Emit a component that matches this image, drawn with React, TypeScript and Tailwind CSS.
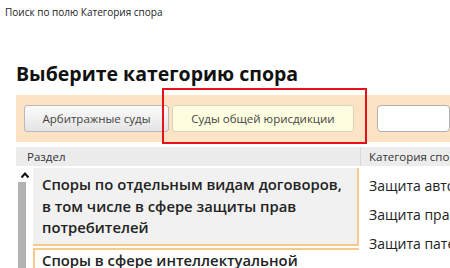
import React from "react";

export default function App() {
  const font = { fontFamily: '"Open Sans", "Noto Sans", sans-serif' };
  return (
    <div className="relative w-[450px] h-[268px] overflow-hidden bg-white text-[#1a1a1a]" style={font}>
      <div className="pl-[5px] pt-[6px] text-[10px] leading-[13px] text-[#222]">Поиск по полю Категория спора</div>
      <div className="ml-[16px] mt-[41px] text-[19.5px] font-bold leading-[28px] text-[#111]">Выберите категорию спора</div>
      <div className="ml-[16px] mt-[7px] h-[47px] bg-[#fce3c6] flex items-center pl-[8px]">
        <div className="shrink-0 w-[145px] h-[27px] rounded-[3px] border border-[#b9b9b9] bg-gradient-to-b from-[#fbfbfb] to-[#e4e4e4] flex items-center justify-center text-[11.5px] text-[#444]">Арбитражные суды</div>
        <div className="shrink-0 ml-[3px] w-[182px] h-[27px] rounded-[3px] border border-[#d9d6b8] bg-[#fffddf] flex items-center justify-center text-[11.5px] text-[#444]">Суды общей юрисдикции</div>
        <div className="ml-[23px] flex-1 h-[27px] rounded-[4px] border border-[#b0b0b0] bg-white"></div>
      </div>
      <div className="ml-[16px] mt-[5px] h-[19px] bg-[#ececec] flex items-center text-[11.5px] text-[#333] overflow-hidden">
        <div className="shrink-0 w-[344px] pl-[11px]">Раздел</div>
        <div className="shrink-0 h-full border-l border-[#d8d8d8] pl-[8px] flex items-center whitespace-nowrap">Категория спора</div>
      </div>
      <div className="ml-[16px] mt-[2px] flex overflow-hidden">
        <div className="shrink-0 w-[344px] flex">
          <div className="w-[17px] flex flex-col items-center">
            <svg width="10" height="8" viewBox="0 0 10 8" className="mt-[3px]">
              <path d="M1.5 6.5 L5 2.5 L8.5 6.5" fill="none" stroke="#111" strokeWidth="2" />
            </svg>
            <div className="mt-[3px] ml-[-5px] w-[8px] h-[100px] bg-[#b3b3b3]"></div>
          </div>
          <div className="flex-1 flex flex-col">
            <div className="w-[326px] h-[78px] bg-[#f1f1f1] border-r-2 border-b-2 border-[#f7c98a] pl-[9px] pt-[6px] text-[14.8px] font-semibold leading-[21.5px] text-[#222] whitespace-nowrap">
              Споры по отдельным видам договоров,<br />в том числе в сфере защиты прав<br />потребителей
            </div>
            <div className="mt-[2px] w-[326px] h-[30px] border-l-2 border-t-2 border-[#f7c98a] pl-[7px] pt-[0px] text-[14.8px] font-semibold leading-[21px] text-[#222] whitespace-nowrap">
              Споры в сфере интеллектуальной
            </div>
          </div>
        </div>
        <div className="shrink-0 pl-[9px] pt-[7px] text-[14px] leading-[21px] text-[#222] whitespace-nowrap">
          <div>Защита авторских прав</div>
          <div className="mt-[8px]">Защита прав</div>
          <div className="mt-[8px]">Защита патентных прав</div>
        </div>
      </div>
      <div className="absolute left-[162px] top-[88px] w-[205px] h-[56px] border-2 border-[#e8101a]"></div>
    </div>
  );
}
